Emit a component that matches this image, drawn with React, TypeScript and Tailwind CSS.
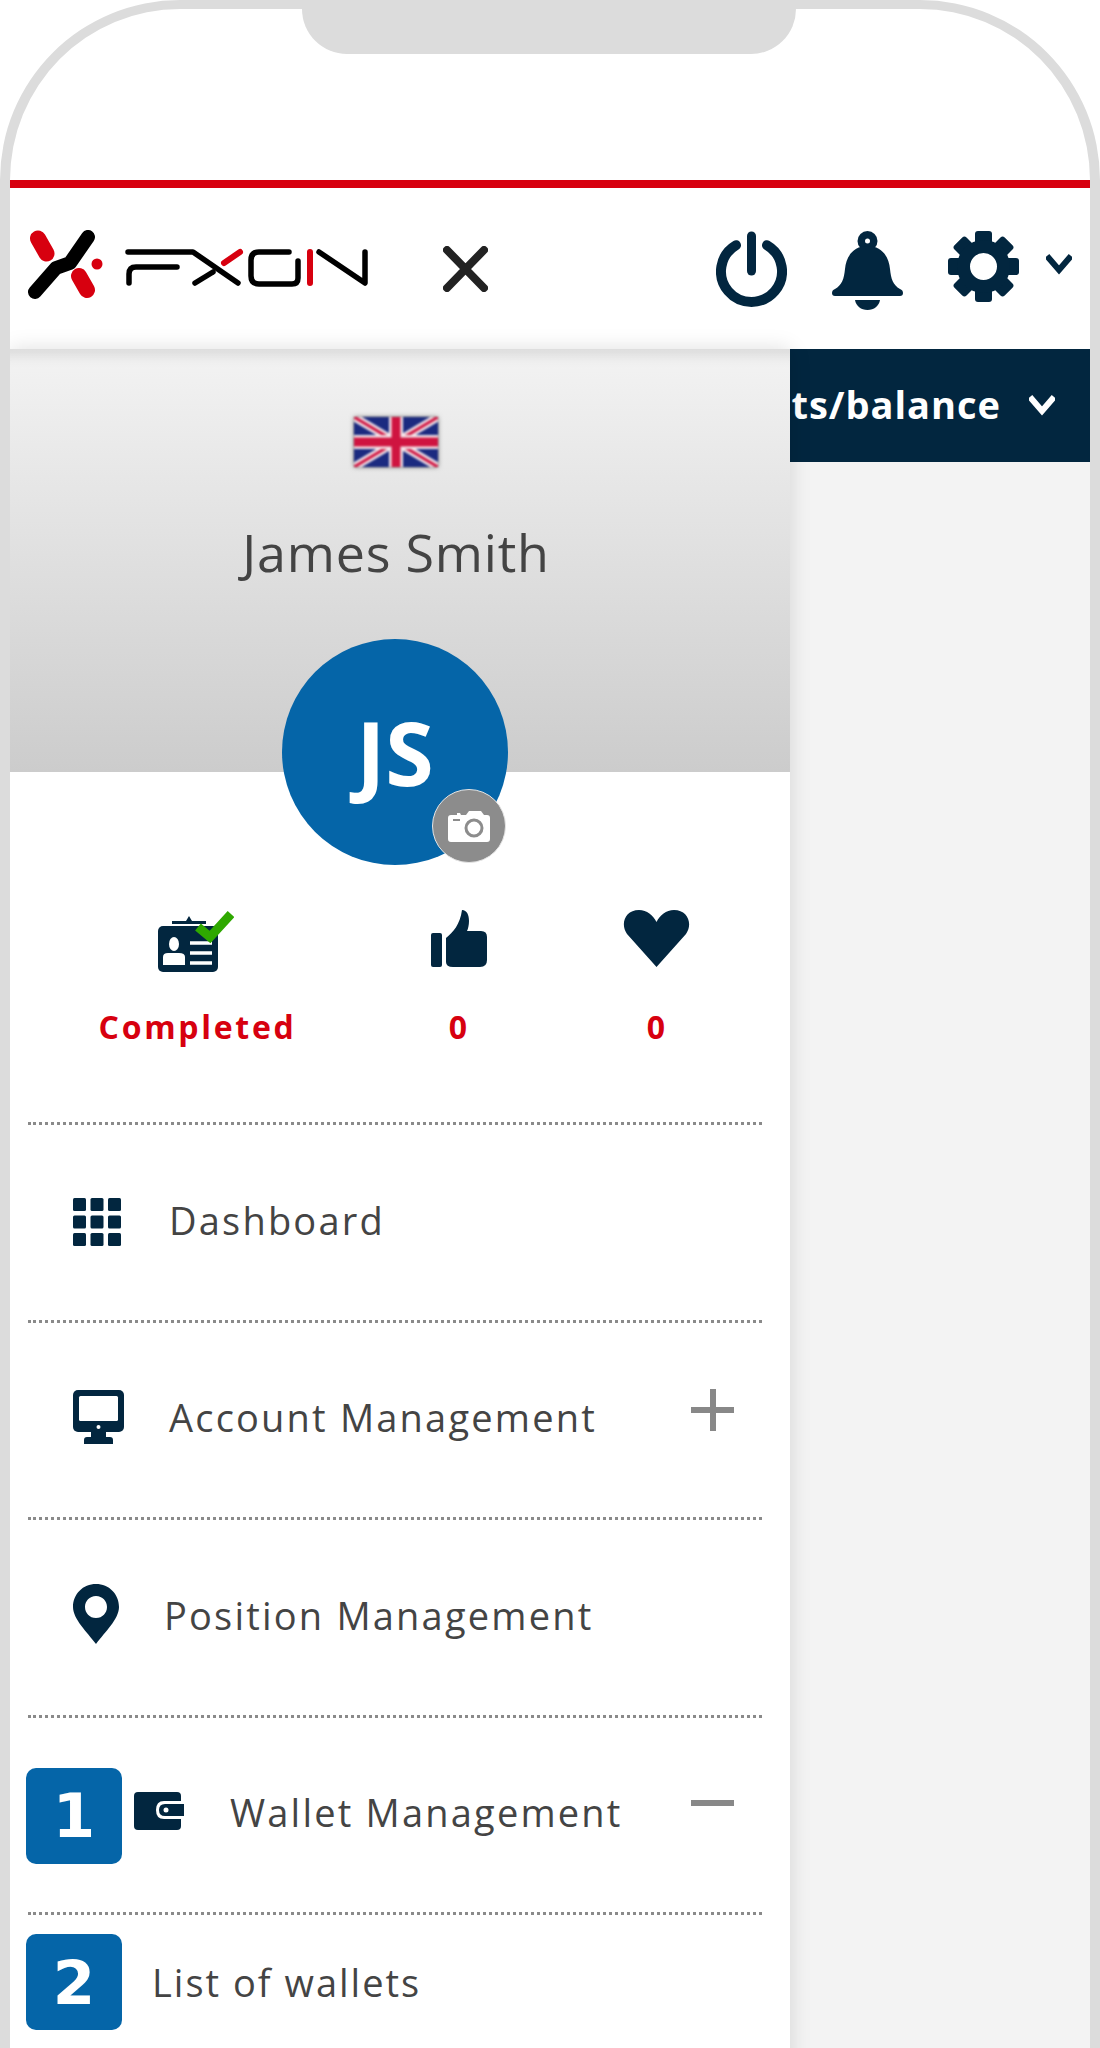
const navy = '#02263f';

const Logo = () => (
  <svg width="340" height="70" viewBox="0 0 340 70" fill="none" strokeLinecap="round" strokeLinejoin="round">
    <path d="M60 7 L42 33 L28 38 L7 62" stroke="#000" strokeWidth="14" />
    <path d="M10 8.5 L18.5 23.5 M51 46 L59 60" stroke="#d7000f" strokeWidth="16" />
    <circle cx="69" cy="34" r="5.5" fill="#d7000f" />
    <g stroke="#000" strokeWidth="5.5">
      <path d="M100 22 H165 L210 53" />
      <path d="M149 37 H108 Q101 37 101 44 V53" />
      <path d="M167 53 L185 42" />
      <path d="M261 22 H231 Q223 22 223 30 V46 Q223 54 231 54 H264 Q270 54 270 48 V31" />
      <path d="M291 22 L337 53 V22" />
    </g>
    <path d="M196 33 L212 22 M282 22 V53" stroke="#d7000f" strokeWidth="6" />
  </svg>
);

const CloseIcon = () => (
  <svg width="45" height="46" viewBox="0 0 45 46" fill="none" stroke="#222" strokeWidth="8" strokeLinecap="round">
    <path d="M4 4 L41 42 M41 4 L4 42" />
  </svg>
);

const PowerIcon = () => (
  <svg width="71" height="76" viewBox="0 0 71 76" fill="none" stroke={navy} strokeLinecap="round">
    <path d="M20 14.2 A30.5 30.5 0 1 0 51 14.2" strokeWidth="10" />
    <path d="M35.5 5 V40" strokeWidth="9" />
  </svg>
);

const BellIcon = () => (
  <svg width="71" height="79" viewBox="0 0 71 79" fill={navy}>
    <circle cx="35.5" cy="10" r="10" />
    <circle cx="35.5" cy="10" r="2.5" fill="#fff" />
    <path d="M35.5 15 C21 15 14 26 13 38 C12 48 10 54 3 58 Q0 59 0 62 Q0 65 3 65 H68 Q71 65 71 62 Q71 59 68 58 C61 54 59 48 58 38 C57 26 50 15 35.5 15 Z" />
    <path d="M23 69 H48 C47 75 42 79 35.5 79 C29 79 24 75 23 69 Z" />
  </svg>
);

const GearIcon = () => (
  <svg width="71" height="71" viewBox="0 0 71 71" fill={navy}>
    {[0, 45, 90, 135, 180, 225, 270, 315].map((a) => (
      <rect key={a} x="27" y="0" width="17" height="20" rx="3" transform={`rotate(${a} 35.5 35.5)`} />
    ))}
    <circle cx="35.5" cy="35.5" r="20" fill="none" stroke={navy} strokeWidth="13" />
  </svg>
);

const Chevron = ({ color }: { color: string }) => (
  <svg width="26" height="23" viewBox="0 0 26 23" fill="none" stroke={color} strokeWidth="6">
    <path d="M1 3 L13 17 L25 3" />
  </svg>
);

const Flag = () => (
  <svg width="84" height="50" viewBox="0 0 84 50" className="blur-[0.8px] drop-shadow-[0_0_2px_rgba(0,0,0,0.5)]">
    <rect width="84" height="50" fill="#1b2a80" />
    <path d="M0 0 L84 50 M84 0 L0 50" stroke="#f4e6ea" strokeWidth="8" />
    <path d="M0 0 L84 50 M84 0 L0 50" stroke="#cf1440" strokeWidth="3" />
    <path d="M42 0 V50 M0 25 H84" stroke="#f4e6ea" strokeWidth="14" />
    <path d="M42 0 V50 M0 25 H84" stroke="#cf1440" strokeWidth="9" />
  </svg>
);

const CameraIcon = () => (
  <svg width="42" height="31" viewBox="0 0 42 31">
    <path d="M3 4 H9 V2 H12 L13 4 H18 L21 0 H33 L36 4 H39 Q42 4 42 7 V28 Q42 31 39 31 H3 Q0 31 0 28 V7 Q0 4 3 4 Z" fill="#fff" />
    <rect x="5" y="8" width="7" height="2" fill="#8c8c8c" />
    <circle cx="26" cy="17" r="8" fill="#fff" stroke="#8c8c8c" strokeWidth="3" />
  </svg>
);

const IdCardIcon = () => (
  <svg width="76" height="62" viewBox="0 0 76 62">
    <path d="M14 11 H28 L31 6 L34 11 H48 V14 H14 Z" fill={navy} />
    <rect x="0" y="16" width="60" height="46" rx="5" fill={navy} />
    <ellipse cx="16" cy="34" rx="5" ry="7" fill="#fff" />
    <path d="M5 55 V47 Q5 43 10 43 H21 Q27 43 27 47 V55 Z" fill="#fff" />
    <path d="M32 33 H54 M32 43 H54 M32 53 H54" stroke="#fff" strokeWidth="3.5" />
    <path d="M40 17 L52 27 L73 4" fill="none" stroke="#2fa800" strokeWidth="9" />
  </svg>
);

const ThumbIcon = () => (
  <svg width="56" height="57" viewBox="0 0 56 57" fill={navy}>
    <rect x="0" y="23" width="11" height="34" rx="2" />
    <path d="M15 28 C22 22 29 15 31 0 C36 0 38 5 38 11 C38 15 37 19 36 21 H50 Q56 21 56 27 V50 Q56 57 49 57 H22 Q15 57 15 52 Z" />
  </svg>
);

const HeartIcon = () => (
  <svg width="67" height="57" viewBox="0 0 67 57" fill={navy}>
    <path d="M33.5 57 L4 24 C-3 14 2 0 16 0 C24 0 30 5 33.5 12 C37 5 43 0 51 0 C65 0 70 14 63 24 Z" />
  </svg>
);

const GridIcon = () => (
  <svg width="48" height="48" viewBox="0 0 48 48" fill={navy}>
    {[0, 17.5, 35].map((y) =>
      [0, 17.5, 35].map((x) => <rect key={`${x}-${y}`} x={x} y={y} width="13" height="13" rx="1.5" />),
    )}
  </svg>
);

const DesktopIcon = () => (
  <svg width="51" height="54" viewBox="0 0 51 54">
    <rect x="0" y="0" width="51" height="42" rx="5" fill={navy} />
    <rect x="6" y="6" width="39" height="25" rx="1.5" fill="#fff" />
    <rect x="23.5" y="35" width="4" height="4" rx="2" fill="#fff" />
    <path d="M18 42 H33 V47 H37 Q40 47 40 50 V54 H11 V50 Q11 47 14 47 H18 Z" fill={navy} />
  </svg>
);

const PinIcon = () => (
  <svg width="46" height="60" viewBox="0 0 46 60">
    <path
      fillRule="evenodd"
      d="M23 0 C36 0 46 10 46 23 C46 35 32 48 23 60 C14 48 0 35 0 23 C0 10 10 0 23 0 Z M23 12 C16.5 12 12 17 12 23 C12 29 16.5 34 23 34 C29.5 34 34 29 34 23 C34 17 29.5 12 23 12 Z"
      fill={navy}
    />
  </svg>
);

const WalletIcon = () => (
  <svg width="50" height="38" viewBox="0 0 50 38">
    <rect x="0" y="0" width="47" height="38" rx="4" fill={navy} />
    <path d="M50 9 H30 Q22 9 22 18 Q22 27 30 27 H50 Z" fill="#fff" />
    <path d="M50 12 H31 Q25 12 25 18 Q25 24 31 24 H50 Z" fill={navy} />
    <circle cx="32" cy="18" r="2.5" fill="#fff" />
  </svg>
);

const NumberBadge = ({ n }: { n: number }) => (
  <div className="w-[96px] h-[96px] shrink-0 rounded-[10px] bg-[#0565a8] flex items-center justify-center text-white font-bold text-[61px] leading-none font-['DejaVu_Sans']">
    {n}
  </div>
);

const MenuRow = ({ children }: { children: React.ReactNode }) => (
  <div className="relative h-[197.5px] ml-[18px] mr-[28px] border-t-[3px] border-dotted border-[#8a8a8a] flex items-center">
    {children}
  </div>
);

const MenuLabel = ({ children }: { children: React.ReactNode }) => (
  <span className="text-[38px] leading-none tracking-[2.2px] text-[#444] -mt-[5px]">{children}</span>
);

export default function App() {
  return (
    <div className="w-[1100px] h-[2048px] overflow-hidden bg-white font-['Open_Sans',sans-serif]">
      <div className="relative w-[1100px] h-[2300px] border-x-[10px] border-y-[9px] border-[#dcdcdc] rounded-[180px] overflow-hidden flex flex-col">
        <div className="absolute -top-[9px] left-[292px] w-[494px] h-[54px] bg-[#dcdcdc] rounded-b-[45px]" />
        <div className="h-[171px] shrink-0" />
        <div className="h-[8px] shrink-0 bg-[#d7000f]" />

        <header className="h-[161px] shrink-0 bg-white flex items-start pt-[42px] relative">
          <div className="ml-[18px]">
            <Logo />
          </div>
          <div className="ml-[75px] mt-[16px]">
            <CloseIcon />
          </div>
          <div className="ml-[228px] mt-[1px]">
            <PowerIcon />
          </div>
          <div className="ml-[45px] mt-[1px]">
            <BellIcon />
          </div>
          <div className="ml-[45px] mt-[1px]">
            <GearIcon />
          </div>
          <div className="ml-[27px] mt-[23px]">
            <Chevron color={navy} />
          </div>
        </header>

        <div className="relative flex-1 bg-[#f3f3f3]">
          <div className="h-[113px] bg-[#02263f] flex items-center justify-end pr-[35px] text-white">
            <span className="font-bold text-[38px] tracking-[1px] mr-[28px] -mt-[2px] whitespace-nowrap">Deposits/balance</span>
            <Chevron color="#fff" />
          </div>

          <aside className="absolute left-0 top-0 w-[780px] h-full bg-white shadow-[0_0_20px_rgba(0,0,0,0.13)]">
            <div className="h-[423px] pr-[8px] bg-gradient-to-b from-[#f3f3f3] to-[#cccccc] shadow-[inset_0_20px_14px_-14px_rgba(0,0,0,0.11)] flex flex-col items-center pt-[68px]">
              <Flag />
              <div className="mt-[59px] text-[52px] leading-none tracking-[0.8px] text-[#444]">James Smith</div>
            </div>

            <div className="relative w-[226px] h-[226px] ml-[272px] -mt-[133px] rounded-full bg-[#0565a8] flex items-center justify-center text-white font-bold text-[88px] leading-none">
              JS
              <div className="absolute left-[150px] top-[150px] w-[74px] h-[74px] rounded-full bg-[#8c8c8c] border border-[#e5e5e5] flex items-center justify-center">
                <CameraIcon />
              </div>
            </div>

            <div className="flex mt-[45px] h-[212px]">
              <div className="w-[372px] flex flex-col items-center">
                <IdCardIcon />
                <span className="mt-[39px] ml-[3px] font-bold text-[32px] leading-none tracking-[2.7px] text-[#d7000f]">Completed</span>
              </div>
              <div className="w-[152px] flex flex-col items-center">
                <div className="ml-[2px]">
                  <ThumbIcon />
                </div>
                <span className="mt-[44px] font-bold text-[32px] leading-none text-[#d7000f]">0</span>
              </div>
              <div className="w-[244px] flex flex-col items-center">
                <HeartIcon />
                <span className="mt-[44px] font-bold text-[32px] leading-none text-[#d7000f]">0</span>
              </div>
            </div>

            <MenuRow>
              <div className="ml-[45px] w-[96px]">
                <GridIcon />
              </div>
              <MenuLabel>Dashboard</MenuLabel>
            </MenuRow>
            <MenuRow>
              <div className="ml-[45px] w-[96px] -mt-[6px]">
                <DesktopIcon />
              </div>
              <MenuLabel>Account Management</MenuLabel>
              <span className="absolute right-[28px] top-[66px] w-[43px] h-[42px] bg-[linear-gradient(#888,#888),linear-gradient(#888,#888)] bg-no-repeat bg-[length:100%_6px,6px_100%] bg-center" />
            </MenuRow>
            <MenuRow>
              <div className="ml-[45px] w-[91px] -mt-[6px]">
                <PinIcon />
              </div>
              <MenuLabel>Position Management</MenuLabel>
            </MenuRow>
            <MenuRow>
              <div className="ml-[-2px] mt-[2px]">
                <NumberBadge n={1} />
              </div>
              <div className="ml-[12px] w-[96px] -mt-[8px]">
                <WalletIcon />
              </div>
              <MenuLabel>Wallet Management</MenuLabel>
              <span className="absolute right-[28px] top-[82px] w-[43px] h-[6px] bg-[#888]" />
            </MenuRow>
            <MenuRow>
              <div className="ml-[-2px] mr-[30px] self-start pt-[19px]">
                <NumberBadge n={2} />
              </div>
              <div className="self-start pt-[48px]">
                <span className="text-[38px] leading-none tracking-[2px] text-[#444]">List of wallets</span>
              </div>
            </MenuRow>
          </aside>
        </div>
      </div>
    </div>
  );
}
